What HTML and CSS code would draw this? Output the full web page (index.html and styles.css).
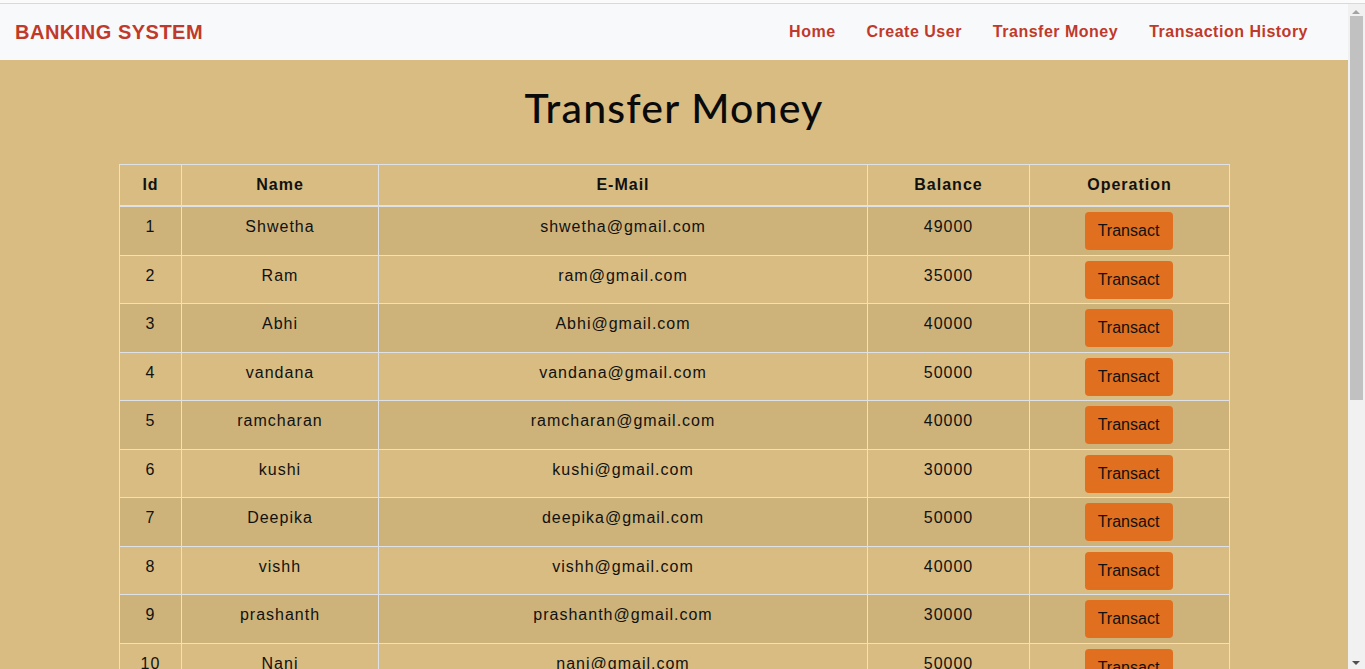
FILE: index.html
```html
<!DOCTYPE html>
<html lang="en">
<head>
<meta charset="utf-8">
<title>Transfer Money</title>
<link rel="stylesheet" href="styles.css">
</head>
<body>
<div class="topline"></div>
<div class="page">
  <nav class="navbar">
    <a class="brand" href="#">BANKING SYSTEM</a>
    <ul class="nav-links">
      <li><a href="#">Home</a></li>
      <li><a href="#">Create User</a></li>
      <li><a href="#">Transfer Money</a></li>
      <li><a href="#">Transaction History</a></li>
    </ul>
  </nav>
  <main class="container">
    <h1 class="title">Transfer Money</h1>
    <table class="users">
      <colgroup>
        <col class="c-id"><col class="c-name"><col class="c-mail"><col class="c-bal"><col class="c-op">
      </colgroup>
      <thead>
        <tr><th>Id</th><th>Name</th><th>E-Mail</th><th>Balance</th><th>Operation</th></tr>
      </thead>
      <tbody>
        <tr><td>1</td><td>Shwetha</td><td>shwetha@gmail.com</td><td>49000</td><td class="op"><button class="btn">Transact</button></td></tr>
        <tr><td>2</td><td>Ram</td><td>ram@gmail.com</td><td>35000</td><td class="op"><button class="btn">Transact</button></td></tr>
        <tr><td>3</td><td>Abhi</td><td>Abhi@gmail.com</td><td>40000</td><td class="op"><button class="btn">Transact</button></td></tr>
        <tr><td>4</td><td>vandana</td><td>vandana@gmail.com</td><td>50000</td><td class="op"><button class="btn">Transact</button></td></tr>
        <tr><td>5</td><td>ramcharan</td><td>ramcharan@gmail.com</td><td>40000</td><td class="op"><button class="btn">Transact</button></td></tr>
        <tr><td>6</td><td>kushi</td><td>kushi@gmail.com</td><td>30000</td><td class="op"><button class="btn">Transact</button></td></tr>
        <tr><td>7</td><td>Deepika</td><td>deepika@gmail.com</td><td>50000</td><td class="op"><button class="btn">Transact</button></td></tr>
        <tr><td>8</td><td>vishh</td><td>vishh@gmail.com</td><td>40000</td><td class="op"><button class="btn">Transact</button></td></tr>
        <tr><td>9</td><td>prashanth</td><td>prashanth@gmail.com</td><td>30000</td><td class="op"><button class="btn">Transact</button></td></tr>
        <tr><td>10</td><td>Nani</td><td>nani@gmail.com</td><td>50000</td><td class="op"><button class="btn">Transact</button></td></tr>
      </tbody>
    </table>
  </main>
</div>
<div class="scrollbar">
  <div class="sb-up"></div>
  <div class="sb-thumb"></div>
  <div class="sb-down"></div>
</div>
</body>
</html>
```
FILE: styles.css
```css
html, body {
  margin: 0;
  padding: 0;
  overflow: hidden;
  height: 100%;
}
body {
  background: #d9bc81;
  font-family: "Liberation Sans", Arial, sans-serif;
  color: #111;
}
.topline {
  height: 3px;
  background: #fbfbfb;
  border-bottom: 1px solid #d9d9d9;
}
.page {
  width: 1348px;
}
.navbar {
  height: 56px;
  background: #f8f9fa;
  display: flex;
  align-items: center;
  justify-content: space-between;
  padding: 0 40px 0 15px;
}
.brand {
  color: #c0392b;
  font-weight: bold;
  font-size: 20px;
  letter-spacing: 0.5px;
  text-decoration: none;
}
.nav-links {
  list-style: none;
  margin: 0;
  padding: 0;
  display: flex;
  gap: 31px;
}
.nav-links a {
  color: #c0392b;
  font-weight: bold;
  font-size: 16px;
  letter-spacing: 0.5px;
  text-decoration: none;
}
.container {
  width: 1110px;
  margin: 0 auto;
}
.title {
  margin: 24px 0 32px;
  font-family: "Lato", "Noto Sans", sans-serif;
  font-weight: 500;
  font-size: 41px;
  line-height: 48px;
  letter-spacing: 1.2px;
  text-align: center;
  color: #0a0a0a;
}
.users {
  width: 100%;
  border-collapse: collapse;
  table-layout: fixed;
  font-size: 16px;
  letter-spacing: 1px;
  text-align: center;
}
.c-id { width: 62px; }
.c-name { width: 197px; }
.c-mail { width: 489px; }
.c-bal { width: 162px; }
.c-op { width: 200px; }
.users th,
.users td {
  border: 1px solid #dee2e6;
}
.users th {
  padding: 8px 8px;
  line-height: 24px;
  font-weight: bold;
  border-bottom: 2px solid #dee2e6;
}
.users td {
  padding: 8px 8px 0;
  line-height: 24px;
  height: 39.56px;
  vertical-align: top;
}
.users tbody tr:nth-child(odd) {
  background: #cdb37a;
}
.users td.op {
  padding: 5px 10px 0 8px;
}
.btn {
  width: 88px;
  height: 38px;
  border: 0;
  border-radius: 4px;
  background: #e0701f;
  color: #111;
  font-family: "Liberation Sans", Arial, sans-serif;
  font-size: 16px;
  letter-spacing: 0;
  padding: 0;
  cursor: pointer;
}
.scrollbar {
  position: fixed;
  top: 4px;
  right: 0;
  bottom: 0;
  width: 17px;
  background: #f1f1f1;
}
.sb-up {
  position: absolute;
  top: 6px;
  left: 4px;
  width: 0;
  height: 0;
  border-left: 4px solid transparent;
  border-right: 4px solid transparent;
  border-bottom: 4px solid #a3a3a3;
}
.sb-thumb {
  position: absolute;
  top: 12px;
  left: 2px;
  width: 13px;
  height: 384px;
  background: #c1c1c1;
}
.sb-down {
  position: absolute;
  bottom: 4px;
  left: 4px;
  width: 0;
  height: 0;
  border-left: 4px solid transparent;
  border-right: 4px solid transparent;
  border-top: 4px solid #505050;
}
```
